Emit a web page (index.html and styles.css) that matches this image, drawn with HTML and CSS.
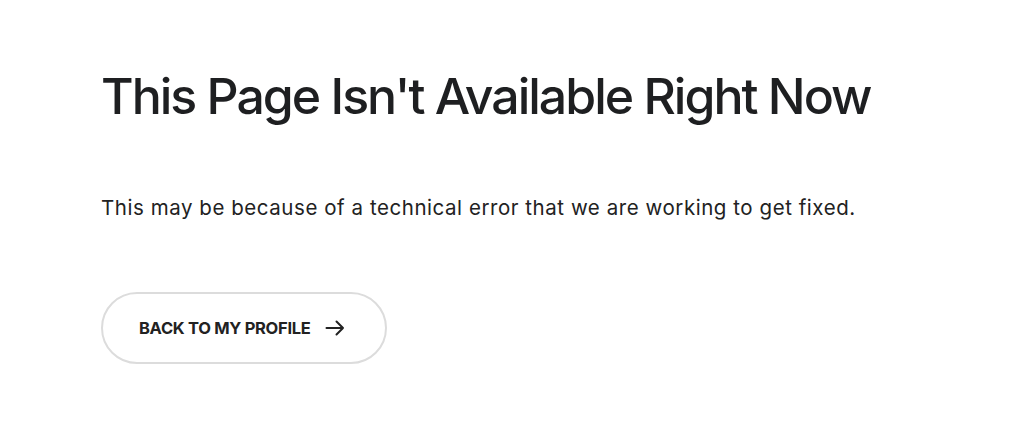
FILE: index.html
```html
<!DOCTYPE html>
<html lang="en">
<head>
<meta charset="utf-8">
<title>This Page Isn't Available Right Now</title>
<link rel="stylesheet" href="styles.css">
</head>
<body>
<main class="page">
  <h1 class="title">This Page Isn't Available Right Now</h1>
  <p class="message">This may be because of a technical error that we are working to get fixed.</p>
  <a class="back-btn" href="#">
    <span class="back-label">BACK TO MY PROFILE</span>
    <svg class="arrow" width="20" height="20" viewBox="0 0 20 20" aria-hidden="true">
      <path d="M1.5 10h16.5M11.5 3.5l6.5 6.5-6.5 6.5" fill="none" stroke="#222" stroke-width="2" stroke-linecap="round" stroke-linejoin="round"/>
    </svg>
  </a>
</main>
</body>
</html>
```
FILE: styles.css
```css
html, body {
  margin: 0;
  padding: 0;
  background: #fff;
}
body {
  font-family: Inter, "Noto Sans", sans-serif;
  color: #222;
}
.page {
  padding: 66px 0 0 101px;
  display: flex;
  flex-direction: column;
  align-items: flex-start;
}
.title {
  margin: 0;
  font-size: 50px;
  font-weight: 500;
  letter-spacing: -2px;
  line-height: 60px;
  color: #1e1f21;
}
.message {
  margin: 68px 0 0;
  font-size: 20.5px;
  line-height: 28px;
  font-weight: 400;
  letter-spacing: 0.55px;
  color: #222;
}
.back-btn {
  margin-top: 70px;
  display: flex;
  align-items: center;
  gap: 15px;
  box-sizing: border-box;
  height: 72px;
  width: 286px;
  padding: 0 36px;
  border: 2px solid #dcdcdc;
  border-radius: 36px;
  text-decoration: none;
  color: #222;
}
.back-label {
  font-size: 16.5px;
  font-weight: 700;
  letter-spacing: -0.3px;
}
.arrow {
  flex: none;
}
```
